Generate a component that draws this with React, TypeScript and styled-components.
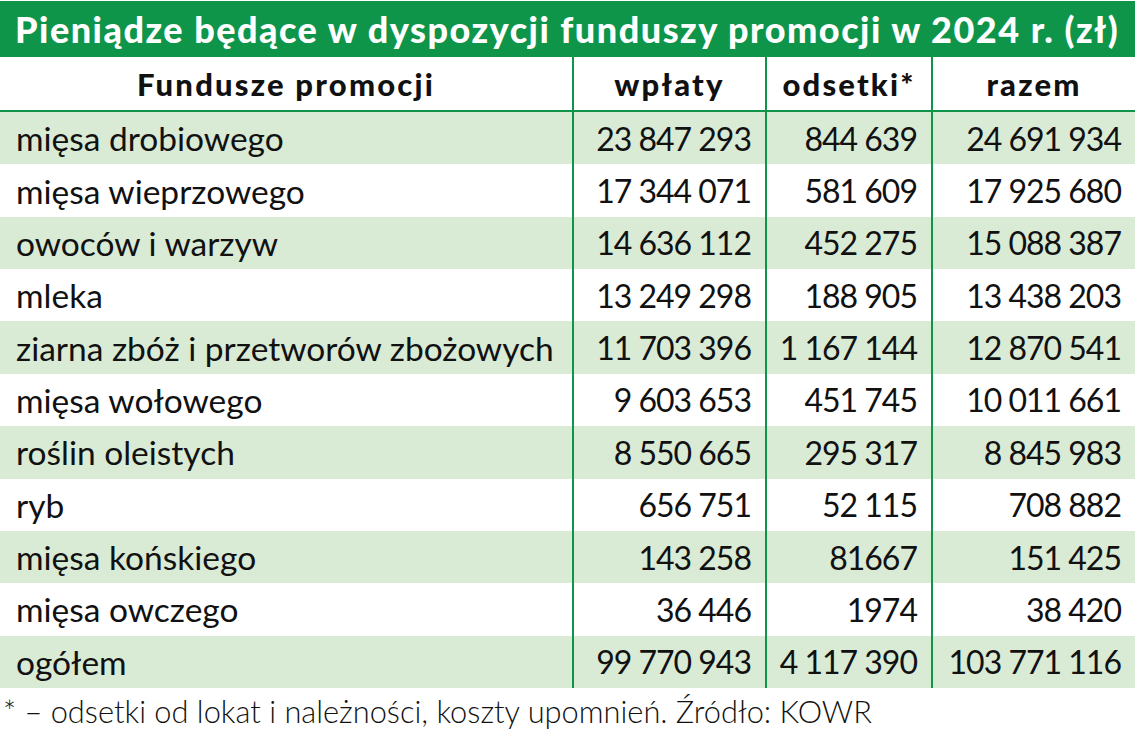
import React from "react";
import styled, { createGlobalStyle } from "styled-components";

const Global = createGlobalStyle`
  html, body { margin: 0; padding: 0; background: #ffffff; }
  body { font-family: "Lato", "Noto Sans", sans-serif; color: #111; }
`;

const GREEN = "#0e9549";
const LIGHT = "#d9ead5";

const Page = styled.div`
  width: 1135px;
  height: 732px;
  display: flex;
  flex-direction: column;
  overflow: hidden;
  & > * { flex-shrink: 0; }
`;

const Title = styled.div`
  height: 56px;
  margin-top: 1px;
  background: ${GREEN};
  color: #fff;
  font-weight: 900;
  font-size: 36px;
  letter-spacing: 1.5px;
  display: flex;
  align-items: center;
  padding-left: 15px;
  white-space: nowrap;
`;

const Grid = styled.div`
  display: grid;
  grid-template-columns: 572px 193px 166px 204px;
`;

const HeadCell = styled.div<{ $first?: boolean }>`
  height: 53px;
  border-bottom: 2px solid ${GREEN};
  border-left: ${(p) => (p.$first ? "none" : `2px solid ${GREEN}`)};
  display: flex;
  align-items: center;
  justify-content: center;
  font-weight: 900;
  font-size: 31px;
  letter-spacing: 2.2px;
  white-space: nowrap;
`;

const Cell = styled.div<{ $first?: boolean; $shade?: boolean }>`
  height: 52.36px;
  background: ${(p) => (p.$shade ? LIGHT : "#fff")};
  border-left: ${(p) => (p.$first ? "none" : `2px solid ${GREEN}`)};
  display: flex;
  align-items: center;
  justify-content: ${(p) => (p.$first ? "flex-start" : "flex-end")};
  padding: ${(p) => (p.$first ? "0 0 0 16px" : "0 14px 0 0")};
  font-size: ${(p) => (p.$first ? "33.5px" : "32px")};
  letter-spacing: ${(p) => (p.$first ? "0" : "-1px")};
  white-space: nowrap;
  box-sizing: border-box;
`;

const Footer = styled.div`
  padding: 3px 0 0 3px;
  font-size: 30.8px;
  font-weight: 300;
  white-space: nowrap;
  line-height: 41px;
`;

const rows: [string, string, string, string][] = [
  ["mięsa drobiowego", "23 847 293", "844 639", "24 691 934"],
  ["mięsa wieprzowego", "17 344 071", "581 609", "17 925 680"],
  ["owoców i warzyw", "14 636 112", "452 275", "15 088 387"],
  ["mleka", "13 249 298", "188 905", "13 438 203"],
  ["ziarna zbóż i przetworów zbożowych", "11 703 396", "1 167 144", "12 870 541"],
  ["mięsa wołowego", "9 603 653", "451 745", "10 011 661"],
  ["roślin oleistych", "8 550 665", "295 317", "8 845 983"],
  ["ryb", "656 751", "52 115", "708 882"],
  ["mięsa końskiego", "143 258", "81667", "151 425"],
  ["mięsa owczego", "36 446", "1974", "38 420"],
  ["ogółem", "99 770 943", "4 117 390", "103 771 116"],
];

export default function App() {
  return (
    <Page>
      <Global />
      <Title>Pieniądze będące w dyspozycji funduszy promocji w 2024 r. (zł)</Title>
      <Grid>
        <HeadCell $first>Fundusze promocji</HeadCell>
        <HeadCell>wpłaty</HeadCell>
        <HeadCell>odsetki*</HeadCell>
        <HeadCell>razem</HeadCell>
        {rows.map((r, i) =>
          r.map((v, j) => (
            <Cell key={`${i}-${j}`} $first={j === 0} $shade={i % 2 === 0}>
              {v}
            </Cell>
          ))
        )}
      </Grid>
      <Footer>* – odsetki od lokat i należności, koszty upomnień. Źródło: KOWR</Footer>
    </Page>
  );
}
